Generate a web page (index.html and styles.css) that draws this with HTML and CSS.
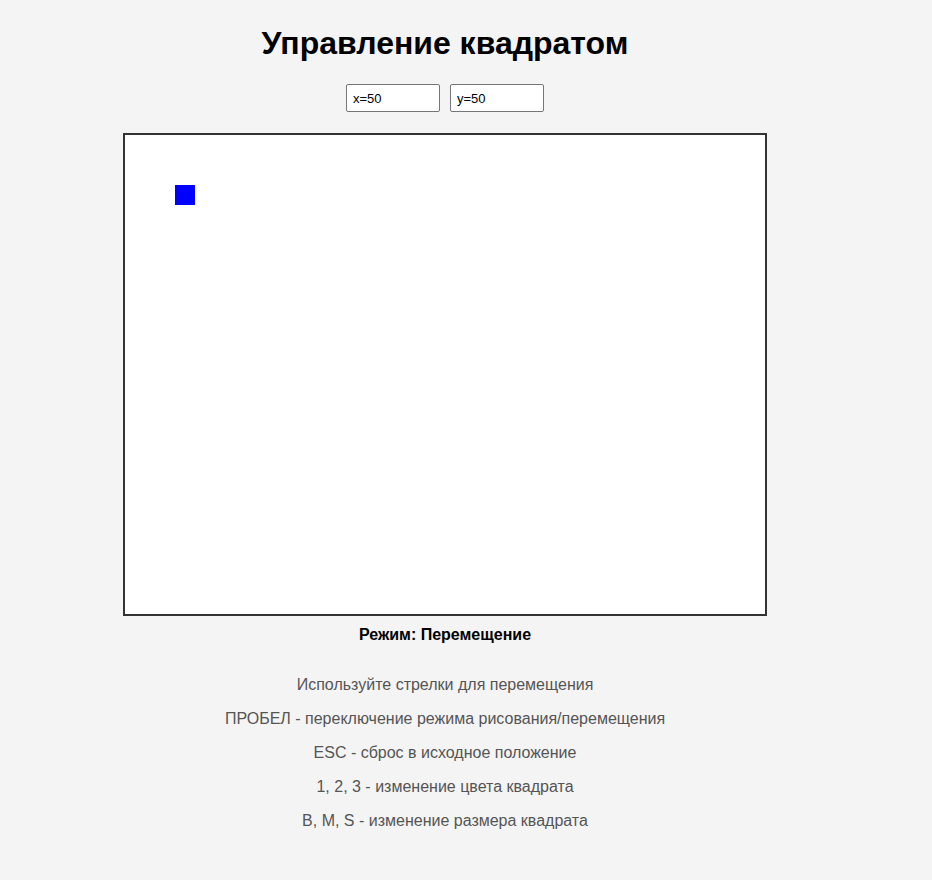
FILE: index.html
```html
<!DOCTYPE html>
<html lang="ru">
<head>
<meta charset="utf-8">
<title>Управление квадратом</title>
<link rel="stylesheet" href="styles.css">
</head>
<body>
<div class="page">
  <h1 class="title">Управление квадратом</h1>
  <div class="coords">
    <input class="coord" type="text" value="x=50" readonly>
    <input class="coord" type="text" value="y=50" readonly>
  </div>
  <div class="board">
    <div class="square" style="left:50px;top:50px;"></div>
  </div>
  <div class="mode">Режим: Перемещение</div>
  <div class="help">
    <p>Используйте стрелки для перемещения</p>
    <p>ПРОБЕЛ - переключение режима рисования/перемещения</p>
    <p>ESC - сброс в исходное положение</p>
    <p>1, 2, 3 - изменение цвета квадрата</p>
    <p>B, M, S - изменение размера квадрата</p>
  </div>
</div>
</body>
</html>
```

FILE: styles.css
```css
html, body {
  margin: 0;
  padding: 0;
  background: #f4f4f4;
}
body {
  font-family: "Liberation Sans", Arial, sans-serif;
  color: #000;
}
.page {
  width: 890px;
  display: flex;
  flex-direction: column;
  align-items: center;
  padding-top: 25px;
}
.title {
  margin: 0;
  font-size: 32px;
  line-height: 37px;
  font-weight: bold;
}
.coords {
  margin-top: 22px;
  display: flex;
  gap: 10px;
}
.coord {
  box-sizing: border-box;
  width: 94px;
  height: 28px;
  padding: 0 6px;
  border: 1px solid #767676;
  border-radius: 2px;
  background: #fff;
  font-family: "Liberation Sans", Arial, sans-serif;
  font-size: 13px;
  color: #000;
  outline: none;
}
.board {
  position: relative;
  margin-top: 21px;
  width: 640px;
  height: 479px;
  background: #fff;
  border: 2px solid #333;
}
.square {
  position: absolute;
  width: 20px;
  height: 20px;
  background: #0000ff;
}
.mode {
  margin-top: 10px;
  font-size: 16px;
  line-height: 18px;
  font-weight: bold;
}
.help {
  margin-top: 32px;
  display: flex;
  flex-direction: column;
  align-items: center;
  gap: 16px;
}
.help p {
  margin: 0;
  font-size: 16px;
  line-height: 18px;
  color: #555;
}
```
